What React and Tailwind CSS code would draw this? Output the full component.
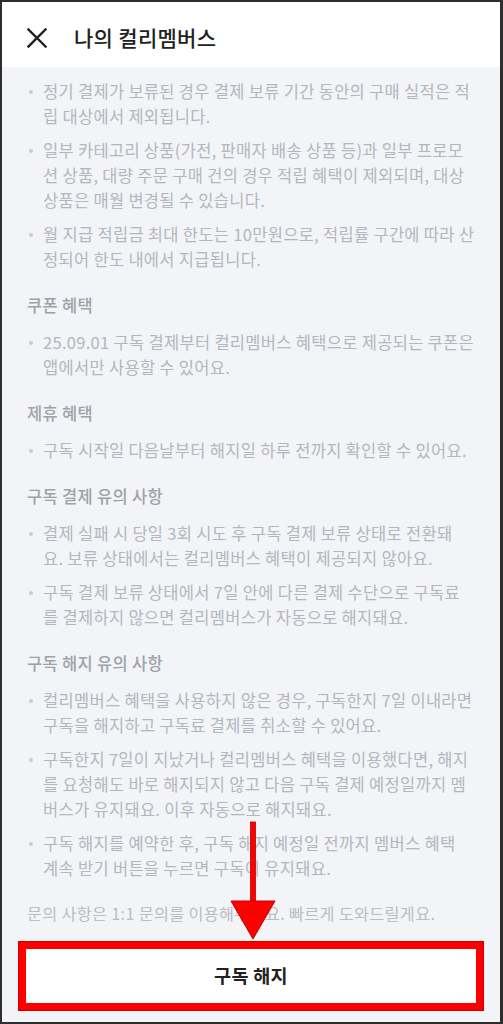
// Each item is kept as its displayed lines so the wrap points stay fixed.
const sections = [
  {
    title: null,
    items: [
      ["정기 결제가 보류된 경우 결제 보류 기간 동안의 구매 실적은 적", "립 대상에서 제외됩니다."],
      [
        "일부 카테고리 상품(가전, 판매자 배송 상품 등)과 일부 프로모",
        "션 상품, 대량 주문 구매 건의 경우 적립 혜택이 제외되며, 대상",
        "상품은 매월 변경될 수 있습니다.",
      ],
      ["월 지급 적립금 최대 한도는 10만원으로, 적립률 구간에 따라 산", "정되어 한도 내에서 지급됩니다."],
    ],
  },
  {
    title: "쿠폰 혜택",
    items: [["25.09.01 구독 결제부터 컬리멤버스 혜택으로 제공되는 쿠폰은", "앱에서만 사용할 수 있어요."]],
  },
  {
    title: "제휴 혜택",
    items: [["구독 시작일 다음날부터 해지일 하루 전까지 확인할 수 있어요."]],
  },
  {
    title: "구독 결제 유의 사항",
    items: [
      ["결제 실패 시 당일 3회 시도 후 구독 결제 보류 상태로 전환돼", "요. 보류 상태에서는 컬리멤버스 혜택이 제공되지 않아요."],
      ["구독 결제 보류 상태에서 7일 안에 다른 결제 수단으로 구독료", "를 결제하지 않으면 컬리멤버스가 자동으로 해지돼요."],
    ],
  },
  {
    title: "구독 해지 유의 사항",
    items: [
      ["컬리멤버스 혜택을 사용하지 않은 경우, 구독한지 7일 이내라면", "구독을 해지하고 구독료 결제를 취소할 수 있어요."],
      [
        "구독한지 7일이 지났거나 컬리멤버스 혜택을 이용했다면, 해지",
        "를 요청해도 바로 해지되지 않고 다음 구독 결제 예정일까지 멤",
        "버스가 유지돼요. 이후 자동으로 해지돼요.",
      ],
      ["구독 해지를 예약한 후, 구독 해지 예정일 전까지 멤버스 혜택", "계속 받기 버튼을 누르면 구독이 유지돼요."],
    ],
  },
];

function CloseIcon() {
  return (
    <svg width="20" height="20" viewBox="0 0 20 20" fill="none">
      <path
        d="M1.5 1.5L18.5 18.5M18.5 1.5L1.5 18.5"
        stroke="#1f1f1f"
        strokeWidth="2.4"
        strokeLinecap="square"
      />
    </svg>
  );
}

function Bullet({ lines }) {
  return (
    <li className="flex">
      <span className="w-4 shrink-0 pt-[11px] pl-[2px]">
        <span className="block h-[4px] w-[4px] rounded-full bg-[#c9cdd2]" />
      </span>
      <p className="flex-1">
        {lines.map((line) => (
          <span key={line} className="block whitespace-nowrap">
            {line}
          </span>
        ))}
      </p>
    </li>
  );
}

function DownArrow() {
  return (
    <svg
      className="pointer-events-none absolute left-[226px] top-[818px]"
      width="50"
      height="122"
      viewBox="0 0 50 122"
    >
      <rect x="22.5" y="2" width="5" height="86" fill="#ff0000" stroke="#c40000" strokeWidth="0.8" />
      <path d="M3 81L47 81L25 119Z" fill="#ff0000" stroke="#c40000" strokeWidth="1" />
    </svg>
  );
}

export default function App() {
  return (
    <div
      className="relative flex h-[1024px] w-[503px] flex-col overflow-hidden border-2 border-r-[3px] border-[#2e2e2e] bg-[#f2f4f7]"
      style={{ fontFamily: '"Noto Sans CJK KR", "Noto Sans", sans-serif' }}
    >
      <header className="flex h-[65px] shrink-0 items-center bg-white pl-[25px] pt-[7px]">
        <CloseIcon />
        <h1 className="ml-[27px] text-[21px] font-medium tracking-[0.3px] text-[#222222]">나의 컬리멤버스</h1>
      </header>

      <main className="flex-1 pl-[25px] pr-[20px] pt-[12px] text-[16.5px] leading-[25px] tracking-[0.3px] text-[#b3b7bd]">
        {sections.map((section, i) => (
          <section key={i}>
            {section.title && (
              <h2 className="mb-[12px] mt-[21px] font-medium text-[#9ea2a8]">{section.title}</h2>
            )}
            <ul className="space-y-[9px]">
              {section.items.map((lines) => (
                <Bullet key={lines[0]} lines={lines} />
              ))}
            </ul>
          </section>
        ))}

        <p className="mt-[20px] text-[16.3px] text-[#babdc2]">
          문의 사항은 1:1 문의를 이용해주세요. 빠르게 도와드릴게요.
        </p>
      </main>

      <div className="shrink-0 px-[17px] pb-[12px]">
        <button className="flex h-[68px] w-full items-center justify-center border-[7px] border-[#ff0000] bg-white text-[18.5px] font-bold tracking-[0.3px] text-[#222222] shadow-[0_0_0_1px_#c80000]">
          구독 해지
        </button>
      </div>

      <DownArrow />
    </div>
  );
}
